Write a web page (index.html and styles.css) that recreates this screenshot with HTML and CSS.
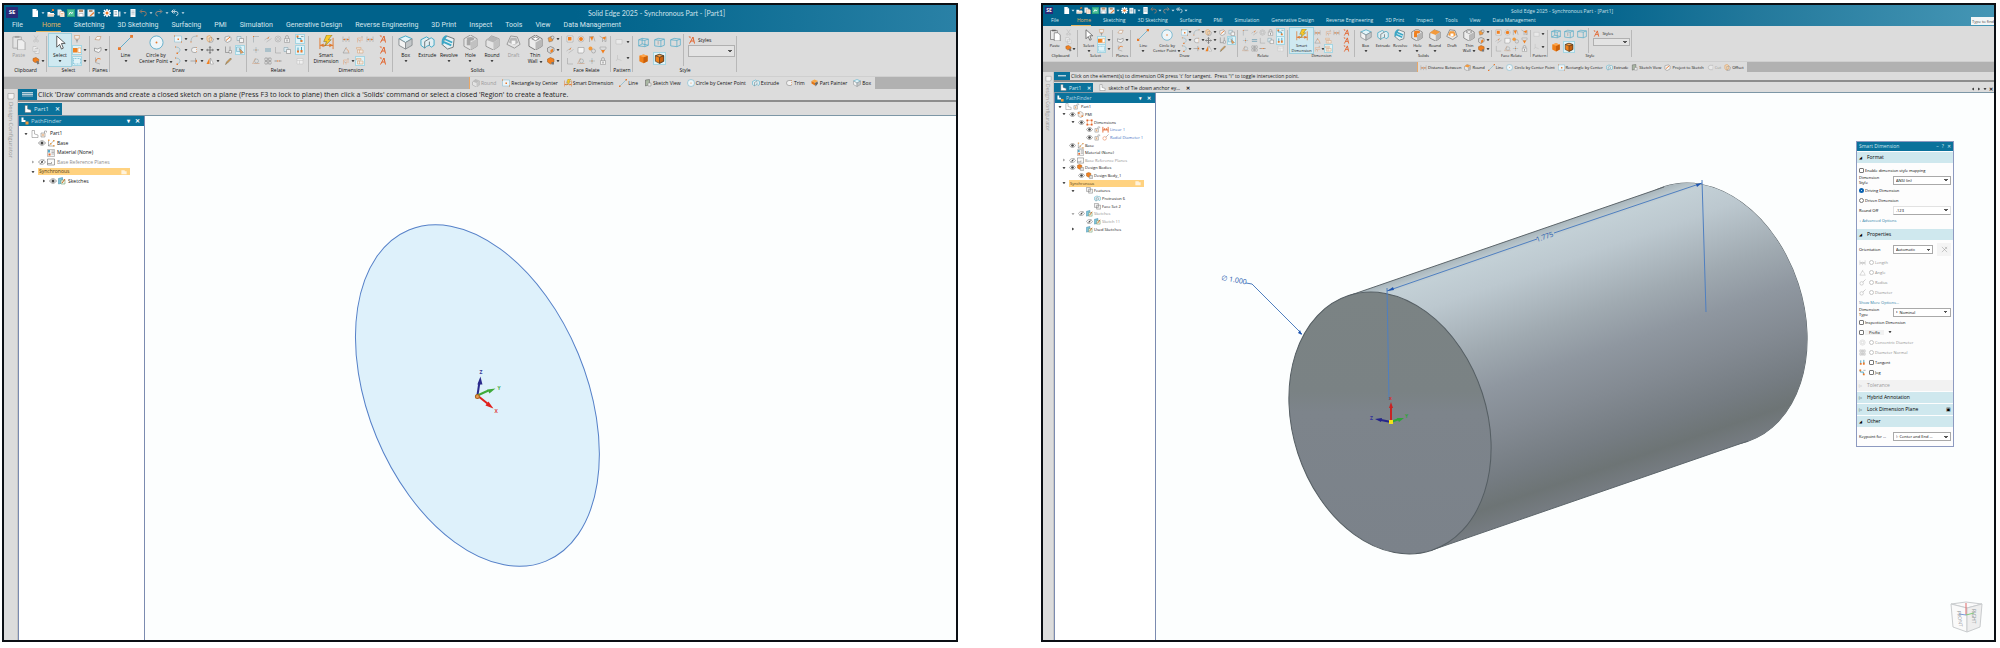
FILE: index.html
```html
<!DOCTYPE html>
<html lang="en">
<head>
<meta charset="utf-8">
<title>Solid Edge 2025 - Synchronous Part</title>
<link rel="stylesheet" href="styles.css">
</head>
<body>
<svg class="sprite" aria-hidden="true">
  <defs>
    <symbol id="dn" viewBox="0 0 16 16"><path d="M2 5h12l-6 7z" fill="currentColor"/></symbol>
    <symbol id="rt" viewBox="0 0 16 16"><path d="M5 2v12l7-6z" fill="currentColor"/></symbol>
    <symbol id="cross" viewBox="0 0 16 16"><path d="M2 2l12 12M14 2L2 14M9 2l5 5" stroke="#8a8a8a" fill="none"/></symbol>
    <symbol id="new" viewBox="0 0 16 16"><path d="M3 0h7l4 4v12H3z" fill="#fff"/><path d="M10 0v4h4z" fill="#b8cdd8"/></symbol>
    <symbol id="open" viewBox="0 0 16 16"><path d="M1 6h5l1 2h7v7H1z" fill="#fff"/><path d="M3 10h13l-3 5H1z" fill="#e9d4c0"/><path d="M9 5l4-4m0 0h-3m3 0v3" stroke="#e8792b" stroke-width="2" fill="none"/></symbol>
    <symbol id="docs" viewBox="0 0 16 16"><path d="M1 1h7l2 3v9H1z" fill="#e6eef2"/><path d="M6 5h7l2 3v8H6z" fill="#fff" stroke="#c98a5a"/><path d="M8 9h5M8 12h5" stroke="#e8792b"/></symbol>
    <symbol id="tpl" viewBox="0 0 16 16"><path d="M0 0h16v16H0z" fill="#2ba37c"/><path d="M2 2h12v12H2z" fill="#4cc09a"/><path d="M4 11l3-5 2 3 3-2" stroke="#fff" stroke-width="2" fill="none"/></symbol>
    <symbol id="save" viewBox="0 0 16 16"><path d="M1 1h14v14H1z" fill="#e9eef1"/><path d="M4 1h8v5H4z" fill="#b78f6e"/><path d="M4 9h8v6H4z" fill="#fff" stroke="#8a9aa5"/></symbol>
    <symbol id="saveas" viewBox="0 0 16 16"><path d="M1 1h14v14H1z" fill="#e9eef1"/><path d="M4 2h7v4H4z" fill="#b78f6e"/><path d="M5 14l8-8 2 2-8 7z" fill="#e8792b"/></symbol>
    <symbol id="gear" viewBox="0 0 16 16"><path d="M8 0v16M0 8h16M2 2l12 12M14 2L2 14" stroke="#fff" stroke-width="3"/><circle cx="8" cy="8" r="5" fill="#fff"/><circle cx="8" cy="8" r="3" fill="#e8792b"/></symbol>
    <symbol id="book" viewBox="0 0 16 16"><path d="M1 2h9v13H1z" fill="#fff"/><path d="M3 5h5M3 8h5M3 11h5" stroke="#55788a"/><path d="M11 5h4v10h-4z" fill="#c7d9e2"/></symbol>
    <symbol id="page" viewBox="0 0 16 16"><path d="M3 0h10v16H3z" fill="#f5f8fa"/><path d="M5 4h6M5 7h6M5 10h6" stroke="#7a97a6"/></symbol>
    <symbol id="undo" viewBox="0 0 16 16"><path d="M3 5h7a4 4 0 010 9M6 1L2 5l4 4" fill="none" stroke="#9a7a66" stroke-width="2"/></symbol>
    <symbol id="redo" viewBox="0 0 16 16"><path d="M13 5H6a4 4 0 000 9M10 1l4 4-4 4" fill="none" stroke="#9a8a80" stroke-width="2"/></symbol>
    <symbol id="hist" viewBox="0 0 16 16"><path d="M2 5h8a4 4 0 010 8M5 1L1 5l4 4M8 1L5 5l3 4" fill="none" stroke="#b9d0dc" stroke-width="2"/></symbol>

    <symbol id="paste" viewBox="0 0 16 16"><path d="M2 2h9v12H2z" fill="#e9e9e9" stroke="#777"/><path d="M4 1h5v2H4z" fill="#666"/><path d="M7 5h5l3 3v8H7z" fill="#fff" stroke="#777"/></symbol>
    <symbol id="cut" viewBox="0 0 16 16"><path d="M4 1l6 9M12 1L6 10" stroke="#b5b5b5" fill="none"/><circle cx="5" cy="12" r="2" fill="none" stroke="#b5b5b5"/><circle cx="11" cy="12" r="2" fill="none" stroke="#b5b5b5"/></symbol>
    <symbol id="copy" viewBox="0 0 16 16"><path d="M2 1h6l2 2v8H2zM6 5h6l2 2v8H6z" fill="#eee" stroke="#b0b0b0"/></symbol>
    <symbol id="brush" viewBox="0 0 16 16"><path d="M2 3l6-2 6 4-1 5-7 1-4-3z" fill="#f08020" stroke="#a85510"/><path d="M8 9l3 6 4-2-3-5z" fill="#777"/></symbol>
    <symbol id="cursor" viewBox="0 0 16 16"><path d="M4 1v12l3-3 2 5 2-1-2-5h4z" fill="#fff" stroke="#555"/></symbol>
    <symbol id="filter" viewBox="0 0 16 16"><path d="M3 1h10l-1 7H4z" fill="#eee" stroke="#d08a50"/><path d="M5 9h6l-2 3v3H7v-3z" fill="#999"/></symbol>
    <symbol id="prio" viewBox="0 0 16 16"><path d="M0 4h9v9H0z" fill="#f08020"/><path d="M10 4h6v9h-6z" fill="#fff" stroke="#f08020"/></symbol>
    <symbol id="dash" viewBox="0 0 16 16"><path d="M1 3h14v11H1z" fill="none" stroke="#3f9fc4" stroke-dasharray="2 1"/></symbol>
    <symbol id="pl1" viewBox="0 0 16 16"><path d="M2 9l4-6h8l-3 7z" fill="#f6f6f6" stroke="#b57a4a"/></symbol>
    <symbol id="pl2" viewBox="0 0 16 16"><path d="M1 10V4l6 2 7-3v6l-5 4z" fill="#f2f2f2" stroke="#666"/></symbol>
    <symbol id="pl3" viewBox="0 0 16 16"><path d="M3 1v10l9 3" fill="none" stroke="#888"/><path d="M4 9c0-6 5-7 9-5" fill="none" stroke="#e8792b" stroke-width="2"/></symbol>
    <symbol id="line" viewBox="0 0 16 16"><path d="M2 14L14 2" stroke="#59a9c9" stroke-width="1"/><path d="M0 13h3v3H0zM13 0h3v3h-3z" fill="#e8792b"/></symbol>
    <symbol id="circ" viewBox="0 0 16 16"><circle cx="8" cy="8" r="7" fill="#eef5f8" stroke="#62aecb"/><circle cx="8" cy="8" r="1" fill="#e8792b"/></symbol>
    <symbol id="rectc" viewBox="0 0 16 16"><path d="M1 2h14v12H1z" fill="#eef5f8" stroke="#7db9d0"/><path d="M7 7h3v3H7zM0 1h2v2H0zM14 13h2v2h-2z" fill="#e8792b"/></symbol>
    <symbol id="curve" viewBox="0 0 16 16"><path d="M2 14C2 2 8 3 14 2" fill="none" stroke="#7a9aa8" stroke-width="1"/><path d="M1 13h2v2H1zM13 1h2v2h-2z" fill="#e8792b"/></symbol>
    <symbol id="offs" viewBox="0 0 16 16"><path d="M2 3l5-2 4 3v7l-6 3-3-4z" fill="#f5d9b8" stroke="#d98a3d"/><path d="M6 6l5-1 4 3-2 6-6 1z" fill="none" stroke="#888"/></symbol>
    <symbol id="arc" viewBox="0 0 16 16"><path d="M3 2c10 0 12 8 4 12" fill="none" stroke="#62a6c0" stroke-width="1"/><path d="M2 1h2v2H2zM5 13h3v3H5z" fill="#e8792b"/></symbol>
    <symbol id="trimc" viewBox="0 0 16 16"><path d="M13 3H8a5 5 0 000 10h5" fill="#f2f2f2" stroke="#777"/><path d="M13 2v12" stroke="#e8792b" stroke-dasharray="2 2"/></symbol>
    <symbol id="move" viewBox="0 0 16 16"><path d="M8 1v14M1 8h14" stroke="#777" stroke-width="2"/><path d="M8 0l3 4H5zM8 16l3-4H5zM0 8l4-3v6zM16 8l-4-3v6z" fill="#888"/></symbol>
    <symbol id="ext" viewBox="0 0 16 16"><path d="M1 8h9M11 2v12" stroke="#777" stroke-width="1"/><path d="M10 8l4-3v6z" fill="#e8792b"/></symbol>
    <symbol id="mirr" viewBox="0 0 16 16"><path d="M1 14l6-12v12z" fill="#f08020"/><path d="M9 2l6 12H9z" fill="#fff" stroke="#888"/></symbol>
    <symbol id="proj" viewBox="0 0 16 16"><path d="M2 12V4l8-2 4 3v6l-7 4z" fill="#f4f4f4" stroke="#777"/><path d="M4 11l8-7" stroke="#e8792b" stroke-width="2"/></symbol>
    <symbol id="tosk" viewBox="0 0 16 16"><path d="M2 3h8v8H2z" fill="#dcebf1" stroke="#7a9aa8"/><path d="M7 7h8v8H7z" fill="#f4f4f4" stroke="#777"/></symbol>
    <symbol id="axis" viewBox="0 0 16 16"><path d="M3 1v12h10M12 1v9" fill="none" stroke="#666"/><path d="M10 9h5v5h-5z" fill="#f6f6f6" stroke="#777"/></symbol>
    <symbol id="region" viewBox="0 0 16 16"><path d="M1 2h9v9H1z" fill="#cfe9f2" stroke="#4aa0be"/><path d="M7 5l8 8-6 2z" fill="#f0a050" stroke="#777"/></symbol>
    <symbol id="pen" viewBox="0 0 16 16"><path d="M3 15l2-5 8-8 2 2-8 8z" fill="#e0a050" stroke="#665"/></symbol>
    <symbol id="r1" viewBox="0 0 16 16"><path d="M3 15V3h11" fill="none" stroke="#8c9aa0"/><path d="M2 2h2v2H2z" fill="#e8792b"/></symbol>
    <symbol id="r2" viewBox="0 0 16 16"><path d="M1 10l10-7M5 14l10-7" stroke="#a0a0a0"/><path d="M7 7l3-2" stroke="#e8792b" stroke-width="2"/></symbol>
    <symbol id="r3" viewBox="0 0 16 16"><circle cx="8" cy="8" r="6" fill="none" stroke="#a5a5a5"/><circle cx="8" cy="8" r="3" fill="none" stroke="#a5a5a5"/></symbol>
    <symbol id="lock" viewBox="0 0 16 16"><path d="M3 7h10v8H3z" fill="#eee" stroke="#888"/><path d="M5 7V4a3 3 0 016 0v3" fill="none" stroke="#888"/><path d="M7 9h2v4H7z" fill="#888"/></symbol>
    <symbol id="plus" viewBox="0 0 16 16"><path d="M8 2v12M2 8h12" stroke="#8fa8b4"/><path d="M7 7h2v2H7z" fill="#e8792b"/></symbol>
    <symbol id="eq" viewBox="0 0 16 16"><path d="M2 6h12M2 10h12" stroke="#7ba6b8" stroke-width="2"/></symbol>
    <symbol id="perp" viewBox="0 0 16 16"><path d="M3 2v12h11" fill="none" stroke="#999"/></symbol>
    <symbol id="tan" viewBox="0 0 16 16"><circle cx="9" cy="8" r="4" fill="none" stroke="#8a9aa0"/><path d="M1 14l6-12M3 13h12" stroke="#c9906a"/></symbol>
    <symbol id="sym" viewBox="0 0 16 16"><path d="M2 2h4v5H2zM10 2h4v5h-4zM2 9h4v5H2zM10 9h4v5h-4zM8 1v14" fill="#f2f2f2" stroke="#777"/></symbol>
    <symbol id="coll" viewBox="0 0 16 16"><path d="M1 8h5M10 8h5" stroke="#999" stroke-width="2"/><path d="M6 7h2v2H6zM9 7h2v2H9z" fill="#e8792b"/></symbol>
    <symbol id="rel" viewBox="0 0 16 16"><path d="M3 2v5h7v6" fill="none" stroke="#44a0c0" stroke-width="2"/><path d="M1 1h4v4H1zM9 10h4v4H9z" fill="#e8792b"/><path d="M10 3h5" stroke="#555"/></symbol>
    <symbol id="rel2" viewBox="0 0 16 16"><path d="M4 3v8M11 2v8" stroke="#44a0c0" stroke-width="2"/><path d="M2 9h4v4H2zM9 8h4v5H9z" fill="#e8792b"/></symbol>
    <symbol id="tbl" viewBox="0 0 16 16"><path d="M2 3h12v11H2zM2 7h12M7 7v7" fill="#f0f0f0" stroke="#c0c0c0"/></symbol>
    <symbol id="smart" viewBox="0 0 16 16"><path d="M1 3v12M15 3v12M1 11h14" stroke="#e07a30" fill="none"/><path d="M1 11l4-2v4zM15 11l-4-2v4z" fill="#e07a30"/><path d="M8 0h6l-4 5h3l-7 7 2-5H5z" fill="#f9c928" stroke="#6b5a20" stroke-width=".5"/></symbol>
    <symbol id="dim" viewBox="0 0 16 16"><path d="M2 3v11M14 3v11M8 6v8M2 9h12" stroke="#9a9a9a" fill="none"/><path d="M2 9l4-2v4zM14 9l-4-2v4z" fill="#e8792b"/></symbol>
    <symbol id="ang" viewBox="0 0 16 16"><path d="M2 14L9 2M2 14h13" stroke="#888" fill="none"/><path d="M7 5c4 1 6 4 6 8" stroke="#e8792b" fill="none" stroke-width="1"/></symbol>
    <symbol id="coord" viewBox="0 0 16 16"><path d="M3 15V6h11M8 15v-5h6" stroke="#e8a070" fill="none"/><path d="M12 2v3M5 9l2 3" stroke="#888"/></symbol>
    <symbol id="dimt" viewBox="0 0 16 16"><path d="M1 3h9v3H1zM3 8h11v6H3zM7 8v6" fill="#f3ece4" stroke="#d39a6a"/></symbol>
    <symbol id="styA" viewBox="0 0 16 16"><path d="M3 15L10 2l3 13M6 10h6" stroke="#e2622a" stroke-width="2" fill="none"/><path d="M1 1h4v4z" fill="#e2622a"/></symbol>
    <symbol id="box" viewBox="0 0 16 16"><path d="M8 1l7 3-7 4-7-4z" fill="#e4f5fa" stroke="#3ba7c6"/><path d="M1 4l7 4v7l-7-4z" fill="#f3f3f3" stroke="#8a8f92"/><path d="M8 8l7-4v7l-7 4z" fill="#c3c7c9" stroke="#8a8f92"/></symbol>
    <symbol id="extr" viewBox="0 0 16 16"><path d="M1 5l6-3 3 2 2-1 3 2v6l-3 2-2-2-3 1-2 2-4-3z" fill="#e2eef2" stroke="#3ba7c6"/><path d="M5 14V7l5-3M10 11V7" stroke="#6b7579" fill="none"/></symbol>
    <symbol id="revo" viewBox="0 0 16 16"><path d="M6 1l8 3-1 9-6 2-6-5 1-2z" fill="#e9f0f2" stroke="#6b7579"/><path d="M3 4l9 4M2 7l9 4M6 1C2 3 1 6 2 10" stroke="#3ba7c6" fill="none" stroke-width="2"/></symbol>
    <symbol id="hole" viewBox="0 0 16 16"><path d="M8 0l7 4v8l-7 4-7-4V4z" fill="#e8e8e8" stroke="#777"/><path d="M8 8l7-4v8l-7 4z" fill="#b5b5b5"/><ellipse cx="8" cy="4" rx="4" ry="2" fill="#f08020"/><path d="M4 5h4v6H4z" fill="#f08020"/></symbol>
    <symbol id="round" viewBox="0 0 16 16"><path d="M7 1l8 3v8l-6 4-8-4V6z" fill="#e8e8e8" stroke="#777"/><path d="M7 1l8 3-6 4-8-3z" fill="#f39a3c"/><path d="M9 8l6-4v8l-6 4z" fill="#b5b5b5"/></symbol>
    <symbol id="draft" viewBox="0 0 16 16"><path d="M5 1l7 1 3 8-6 4-8-4z" fill="#e8e8e8" stroke="#777"/><path d="M5 3h6l2 5-4 3-6-3z" fill="#f39a3c"/><path d="M6 6h4v4H6z" fill="#fff"/></symbol>
    <symbol id="thin" viewBox="0 0 16 16"><path d="M8 0l7 4v8l-7 4-7-4V4z" fill="#ececec" stroke="#777"/><path d="M8 8l7-4v8l-7 4z" fill="#b8b8b8"/><path d="M8 2l4 2-4 2-4-2z" fill="#fff" stroke="#888"/></symbol>
    <symbol id="add1" viewBox="0 0 16 16"><path d="M2 6l6-3 5 2-2 7-7 2z" fill="#f39a3c" stroke="#777"/><circle cx="11" cy="5" r="3" fill="#ddd" stroke="#666"/></symbol>
    <symbol id="add2" viewBox="0 0 16 16"><path d="M1 4l6-3 7 3v6l-7 5-6-4z" fill="#d5d5d5" stroke="#555"/><path d="M7 8l5-3v6l-5 3z" fill="#f08020"/></symbol>
    <symbol id="add3" viewBox="0 0 16 16"><path d="M1 4l6-3 7 3v6l-7 4-6-4z" fill="#f08020" stroke="#9b5a1c"/><path d="M9 10h5v5H9z" fill="#777"/></symbol>
    <symbol id="f1" viewBox="0 0 16 16"><path d="M2 2h12v12H2z" fill="#eee" stroke="#999"/><path d="M4 4h7v7H4z" fill="#f08020"/></symbol>
    <symbol id="f2" viewBox="0 0 16 16"><circle cx="8" cy="8" r="6" fill="#eee" stroke="#999"/><circle cx="8" cy="8" r="4" fill="#f08020"/></symbol>
    <symbol id="f3" viewBox="0 0 16 16"><path d="M3 14V3h8l3 10" fill="none" stroke="#8a8a8a"/><path d="M4 4l7-1-3 9z" fill="#f08020"/></symbol>
    <symbol id="f4" viewBox="0 0 16 16"><path d="M1 2l6 4v8M14 3v10l-5-2" fill="none" stroke="#888"/><path d="M6 5l8-2-2 7z" fill="#f08020"/></symbol>
    <symbol id="f5" viewBox="0 0 16 16"><path d="M2 3h12v9l-3 2H2z" fill="#f4f4f4" stroke="#888"/></symbol>
    <symbol id="f6" viewBox="0 0 16 16"><circle cx="5" cy="5" r="4" fill="#f39a3c"/><circle cx="11" cy="10" r="4" fill="#ddd" stroke="#888"/></symbol>
    <symbol id="f7" viewBox="0 0 16 16"><path d="M2 2h12v4L8 9 2 6z" fill="#ddd" stroke="#999"/><path d="M4 8h8l-4 7z" fill="#f08020"/></symbol>
    <symbol id="pat" viewBox="0 0 16 16"><path d="M2 3h12v9H2z" fill="#e9e9e9" stroke="#bbb"/></symbol>
    <symbol id="pat2" viewBox="0 0 16 16"><path d="M5 2v8l-3 4M5 10l8 3" fill="none" stroke="#bbb"/></symbol>
    <symbol id="wire1" viewBox="0 0 16 16"><path d="M1 4l5-2 9 1v9l-5 2-9-1zM1 4l9 1v9M10 5l5-2M6 2v8l9 2M6 10l-5 3" fill="none" stroke="#4aa7c6"/></symbol>
    <symbol id="wire2" viewBox="0 0 16 16"><path d="M1 4l5-2 9 1v9l-5 2-9-1zM1 4l9 1v9M10 5l5-2" fill="none" stroke="#4aa7c6"/><path d="M6 6v5" stroke="#999"/></symbol>
    <symbol id="wire3" viewBox="0 0 16 16"><path d="M1 4l5-2 9 1v9l-5 2-9-1zM1 4l9 1v9M10 5l5-2" fill="none" stroke="#4aa7c6"/></symbol>
    <symbol id="ocube" viewBox="0 0 16 16"><path d="M2 4l6-2 6 2v8l-6 3-6-3z" fill="#f08019"/><path d="M8 6l6-2v8l-6 3z" fill="#c9600c"/><path d="M2 4l6-2 6 2-6 2z" fill="#ffa64d"/></symbol>
    <symbol id="ocube2" viewBox="0 0 16 16"><path d="M2 4l6-2 6 2v8l-6 3-6-3z" fill="#f08019" stroke="#4a3a28"/><path d="M8 6l6-2v8l-6 3z" fill="#c9600c" stroke="#4a3a28"/><path d="M2 4l6-2 6 2-6 2z" fill="#ffa64d" stroke="#4a3a28"/></symbol>
    <symbol id="skv" viewBox="0 0 16 16"><path d="M3 2l8-1v10l-8 3z" fill="#a9b7a2" stroke="#555"/><path d="M8 8h6v6H8z" fill="#eee" stroke="#888"/></symbol>
    <symbol id="paint" viewBox="0 0 16 16"><path d="M1 4l6-3 7 3-6 4z" fill="#f9a845"/><path d="M1 4l7 4v5L1 9z" fill="#e27615"/><path d="M8 8l5-3 1 4-5 6z" fill="#666"/></symbol>
    <symbol id="part" viewBox="0 0 16 16"><path d="M2 1h5v7l7 2v5H2z" fill="#fff" stroke="#777"/></symbol>
    <symbol id="pfic" viewBox="0 0 16 16"><path d="M1 1h4v5h4v4H1z" fill="#fff"/><path d="M9 9h6v6H9z" fill="#f39a3c"/></symbol>
    <symbol id="unlock" viewBox="0 0 16 16"><path d="M2 6h8v8H2z" fill="#f7efe6" stroke="#777"/><path d="M9 6V2h4v3" fill="none" stroke="#777"/><path d="M5 8h2v4H5z" fill="#e8a060"/></symbol>
    <symbol id="eye" viewBox="0 0 16 16"><path d="M1 8c4-6 10-6 14 0-4 6-10 6-14 0z" fill="#fff" stroke="#444"/><circle cx="8" cy="8" r="3" fill="#444"/></symbol>
    <symbol id="eyex" viewBox="0 0 16 16"><path d="M1 8c4-6 10-6 14 0-4 6-10 6-14 0z" fill="#fff" stroke="#555"/><circle cx="8" cy="8" r="2" fill="#555"/><path d="M4 13l8-10" stroke="#444"/></symbol>
    <symbol id="base" viewBox="0 0 16 16"><path d="M3 2v12h12M3 14L14 3" stroke="#666" fill="none"/><path d="M2 1h3v3H2zM12 2h3v3h-3zM12 12h3v3h-3zM6 8h3v3H6z" fill="#e8a050"/></symbol>
    <symbol id="mat" viewBox="0 0 16 16"><path d="M1 1h14v14H1z" fill="#f4f4f4" stroke="#888"/><path d="M2 2h4v5H2z" fill="#5aa9c9"/><path d="M3 9h4v4H3z" fill="#e8692b"/><path d="M9 4h5M9 7h5M9 10h5" stroke="#777"/></symbol>
    <symbol id="refp" viewBox="0 0 16 16"><path d="M1 2h14v12H1zM1 11h8v-3" fill="#fafafa" stroke="#555"/></symbol>
    <symbol id="sk" viewBox="0 0 16 16"><path d="M1 3l8-2v11l-8 2z" fill="#7fc3dc" stroke="#3b88a5"/><path d="M6 6h8v8H6z" fill="#eef7ea" stroke="#5a8a5a"/><path d="M8 12l6-8" stroke="#d06a20" stroke-width="2"/></symbol>
    <symbol id="pmi" viewBox="0 0 16 16"><path d="M2 3l6-2 6 4v6l-5 4-6-3z" fill="#f6eee6" stroke="#777"/><path d="M2 3h4v3H2zM10 10h4v3h-4z" fill="#e8792b"/></symbol>
    <symbol id="dims" viewBox="0 0 16 16"><path d="M3 3h10v10H3z" fill="none" stroke="#e8792b" stroke-width="1"/><path d="M1 1h4v4H1zM11 1h4v4h-4zM1 11h4v4H1zM11 11h4v4h-4z" fill="#e2622a"/></symbol>
    <symbol id="lin" viewBox="0 0 16 16"><path d="M2 2v13M14 2v13M2 9h12M6 5v4M10 5v4" stroke="#e2622a" stroke-width="2" fill="none"/></symbol>
    <symbol id="rad" viewBox="0 0 16 16"><circle cx="6" cy="10" r="4" fill="none" stroke="#e2622a"/><path d="M9 7l6-6" stroke="#666"/></symbol>
    <symbol id="body" viewBox="0 0 16 16"><path d="M1 3l5-2 5 2v6l-5 3-5-3z" fill="#f08020" stroke="#a55a15"/><path d="M8 8h7v7H8z" fill="#ddd" stroke="#777"/></symbol>
    <symbol id="feat" viewBox="0 0 16 16"><path d="M1 1h9v9H1zM6 5h9v9H6z" fill="#f4f4f4" stroke="#666"/></symbol>
    <symbol id="mark" viewBox="0 0 16 16"><path d="M1 3h9v3h5v8H1z" fill="#fff3dc"/></symbol>
  </defs>
</svg>

<main class="desk">
  <section class="win win-a" aria-label="Sketch region">
    <header class="top">
      <div class="titlebar"><div class="qat"></div><h1>Solid Edge 2025 - Synchronous Part - [Part1]</h1></div>
      <nav class="menu"></nav>
    </header>
    <div class="ribbon"></div>
    <div class="quick"><div class="quick-in"></div></div>
    <div class="work">
      <aside class="rail"><svg class="ic"><use href="#f5"/></svg><span>Design Configurator</span></aside>
      <div class="doc">
        <p class="prompt"><span class="chip"></span>Click 'Draw' commands and create a closed sketch on a plane (Press F3 to lock to plane) then click a 'Solids' command or select a closed 'Region' to create a feature.</p>
        <div class="tabs">
          <button class="tab on"><svg class="ic"><use href="#part"/></svg>Part1<b>✕</b></button>
        </div>
        <div class="area">
          <aside class="finder">
            <h2><svg class="ic"><use href="#pfic"/></svg>PathFinder<button aria-label="Options">▾</button><button aria-label="Close">✕</button></h2>
            <ul class="tree"></ul>
          </aside>
          <div class="view">
            <svg class="scene" viewBox="145 116 810 523" role="img" aria-label="Closed circular region in perspective">
              <ellipse cx="477" cy="395" rx="179" ry="109" transform="rotate(67.500 477 395)" fill="#def1fb" stroke="#5580c8"/>
              <g stroke-width="2">
                <path d="M477 395l2-13" stroke="#2b2b8c"/><path d="M480 376l2 8h-5z" fill="#2b2b8c"/>
                <path d="M477 395l11-5" stroke="#3faa3a"/><path d="M495 388l-6 5-2-4z" fill="#3faa3a"/>
                <path d="M477 395l10 8" stroke="#e0201c"/><path d="M493 408l-8-3 3-4z" fill="#e0201c"/>
              </g>
              <circle cx="477" cy="396" r="2" fill="#e89a50" stroke="#a8641e"/>
              <g class="axes"><text x="479" y="374" fill="#3a3a96">Z</text><text x="497" y="389" fill="#4fb04a">Y</text><text x="494" y="412" fill="#e0403c">X</text></g>
            </svg>
          </div>
        </div>
      </div>
    </div>
  </section>

  <section class="win win-b" aria-label="Dimensioned cylinder">
    <header class="top">
      <div class="titlebar"><div class="qat"></div><h1>Solid Edge 2025 - Synchronous Part - [Part1]</h1></div>
      <div class="menurow"><nav class="menu"></nav><input class="find" type="text" aria-label="Find a command" value="Type to find"></div>
    </header>
    <div class="ribbon"></div>
    <div class="quick"><div class="quick-in"></div></div>
    <div class="work">
      <aside class="rail"><svg class="ic"><use href="#f5"/></svg><span>Design Configurator</span></aside>
      <div class="doc">
        <p class="prompt"><span class="chip"></span>Click on the element(s) to dimension OR press 't' for tangent.&nbsp; Press "i" to toggle intersection point.</p>
        <div class="tabs">
          <button class="tab on"><svg class="ic"><use href="#part"/></svg>Part1<b>✕</b></button>
          <button class="tab"><svg class="ic"><use href="#part"/></svg>sketch of Tie down anchor ey...<b>✕</b></button>
          <span class="tabnav"><svg class="ic flip"><use href="#rt"/></svg><svg class="ic"><use href="#rt"/></svg><svg class="ic"><use href="#dn"/></svg><b>✕</b></span>
        </div>
        <div class="area">
          <aside class="finder">
            <h2><svg class="ic"><use href="#pfic"/></svg>PathFinder<button aria-label="Options">▾</button><button aria-label="Close">✕</button></h2>
            <ul class="tree"></ul>
          </aside>
          <div class="view">
            <svg class="scene" viewBox="1156 93 838 547" role="img" aria-label="Cylinder with diameter and length dimensions">
              <defs>
                <linearGradient id="side" gradientUnits="userSpaceOnUse" x1="1348" y1="296" x2="1435" y2="549">
                  <stop offset="0" stop-color="#a9b6bc"/><stop offset=".04" stop-color="#c3d0d6"/><stop offset=".14" stop-color="#bcc8cf"/><stop offset=".35" stop-color="#a0aab1"/><stop offset=".5" stop-color="#8f97a0"/><stop offset=".66" stop-color="#838a92"/><stop offset=".82" stop-color="#757c82"/><stop offset=".92" stop-color="#6d7475"/><stop offset="1" stop-color="#767c82"/>
                </linearGradient>
                <linearGradient id="face" gradientUnits="userSpaceOnUse" x1="0" y1="292" x2="0" y2="554">
                  <stop offset="0" stop-color="#7b8384"/><stop offset=".38" stop-color="#7a8284"/><stop offset=".46" stop-color="#7d848b"/><stop offset="1" stop-color="#7b828a"/>
                </linearGradient>
                <clipPath id="hull"><ellipse cx="1706" cy="314" rx="134" ry="97" transform="rotate(72 1706 314)"/><path d="M1348 296L1664 187L1748 441L1432 550z"/></clipPath>
                <clipPath id="cap"><ellipse cx="1390" cy="423" rx="134" ry="97" transform="rotate(72 1390 423)"/></clipPath>
              </defs>
              <ellipse cx="1706" cy="314" rx="134" ry="97" transform="rotate(72 1706 314)" fill="none" stroke="#5d666b"/>
              <path d="M1280 170h540v400h-540z" fill="url(#side)" clip-path="url(#hull)"/>
              <path d="M1348 296L1664 187M1432 550L1748 441" stroke="#5d666b"/>
              <path d="M1280 280h220v290h-220z" fill="url(#face)" clip-path="url(#cap)"/>
              <ellipse cx="1390" cy="423" rx="134" ry="97" transform="rotate(72 1390 423)" fill="none" stroke="#555e63"/>
              <g stroke="#4f7fc0" fill="none">
                <path d="M1387 291L1537 239M1554 233L1702 183M1387 288l2 112M1702 180l4 132M1246 283l6 1 50 50"/>
              </g>
              <path d="M1387 291l6-4 1 3zM1702 183l-6 1 1 3zM1302 335l-4-2 2-3z" fill="#1f55b0"/>
              <text class="dimtext" x="1537" y="242" transform="rotate(-19 1537 242)">1.775</text>
              <text class="dimtext" x="1221" y="280" transform="rotate(10 1221 280)">∅ 1.000</text>
              <path d="M1391 422v-16" stroke="#c82222" stroke-width="2"/><path d="M1391 402l2 6h-4z" fill="#c82222"/>
              <path d="M1391 422l8-3" stroke="#2fa43a" stroke-width="2"/><path d="M1404 418l-5 4-2-4z" fill="#2fa43a"/>
              <path d="M1391 422l-10-2" stroke="#24248a" stroke-width="2"/><path d="M1375 419l7-1-1 4z" fill="#24248a"/>
              <path d="M1389 420h4v4h-4z" fill="#f4e11a"/>
              <g class="axes"><text x="1389" y="400" fill="#d03030">x</text><text x="1405" y="418" fill="#2fa43a">Y</text><text x="1370" y="420" fill="#33339a">Z</text></g>
              <g stroke="#c9ccce" fill="#fafafa">
                <path d="M1951 604l15-2 16 2-15 4z"/><path d="M1951 604l16 4v24l-14-5z"/><path d="M1967 608l15-4-2 23-13 5z" fill="#eeeeee"/>
              </g>
              <path d="M1966 603v12" stroke="#e06a6a"/><path d="M1966 615l8-2" stroke="#7ec87a"/><path d="M1966 615l-7-1" stroke="#7a9ad8"/>
              <g class="cube"><text x="1957" y="611" transform="rotate(82 1957 611)">FRONT</text><text x="1972" y="609" transform="rotate(90 1972 609)">RIGHT</text></g>
            </svg>

            <form class="dialog">
              <header><h3>Smart Dimension</h3><button type="button" aria-label="Minimize">–</button><button type="button" aria-label="Help">?</button><button type="button" aria-label="Close">✕</button></header>
              <h4><i>◢</i>Format</h4>
              <div class="sec">
                <label class="row"><input type="checkbox">Enable dimension style mapping</label>
                <label class="row field"><span>Dimension Style</span><select><option>ANSI (in)</option></select></label>
                <label class="row"><input type="radio" name="drv" checked>Driving Dimension</label>
                <label class="row"><input type="radio" name="drv">Driven Dimension</label>
                <label class="row field"><span>Round Off</span><select class="lite"><option>.123</option></select></label>
                <a class="row" href="#adv">+ Advanced Options</a>
              </div>
              <h4><i>◢</i>Properties</h4>
              <div class="sec props">
                <div class="row field tall"><label for="ori">Orientation</label><select id="ori"><option>Automatic</option></select><button type="button" aria-label="Pick axis"><svg class="ic"><use href="#cross"/></svg></button></div>
                <label class="row off"><svg class="ic"><use href="#dim"/></svg><input type="radio" name="kind" disabled>Length</label>
                <label class="row off"><svg class="ic"><use href="#ang"/></svg><input type="radio" name="kind" disabled>Angle</label>
                <label class="row off"><svg class="ic"><use href="#rad"/></svg><input type="radio" name="kind" disabled>Radius</label>
                <label class="row off"><svg class="ic"><use href="#rad"/></svg><input type="radio" name="kind" disabled>Diameter</label>
                <a class="row" href="#more">Show More Options...</a>
                <label class="row field"><span>Dimension Type</span><select><option>ˣ&nbsp; Nominal</option></select></label>
                <label class="row"><input type="checkbox">Inspection Dimension</label>
                <label class="row"><input type="checkbox"><span class="btn">Prefix</span><svg class="ic car"><use href="#dn"/></svg></label>
                <label class="row off"><svg class="ic"><use href="#r3"/></svg><input type="radio" name="dia" disabled>Concentric Diameter</label>
                <label class="row off"><svg class="ic"><use href="#sym"/></svg><input type="radio" name="dia" disabled>Diameter Normal</label>
                <label class="row"><svg class="ic"><use href="#rel2"/></svg><input type="checkbox">Tangent</label>
                <label class="row"><svg class="ic"><use href="#rel"/></svg><input type="checkbox">Jog</label>
              </div>
              <h4 class="mute"><i>▷</i>Tolerance</h4>
              <h4><i>▷</i>Hybrid Annotation</h4>
              <h4><i>▷</i>Lock Dimension Plane<span class="lockbox">▣</span></h4>
              <h4><i>◢</i>Other</h4>
              <div class="sec last">
                <label class="row field tall"><span>Keypoint for ...</span><select><option>⁝◦ Center and End ...</option></select></label>
              </div>
            </form>
          </div>
        </div>
      </div>
    </div>
  </section>
</main>
<script src="app.js"></script>
</body>
</html>
```
FILE: styles.css
```css
* { box-sizing: border-box; }
body { margin: 0; background: #fff; color: #111; font-family: "Open Sans", "Noto Sans", sans-serif; }
button, input, select { font: inherit; color: inherit; margin: 0; padding: 0; border: 0; background: none; }
h1, h2, h3, h4, p, ul { margin: 0; padding: 0; font-size: inherit; font-weight: normal; list-style: none; }
a { text-decoration: none; }
.sprite { position: absolute; width: 0; height: 0; }
.ic { display: block; flex: none; width: var(--sm); height: var(--sm); overflow: visible; }

.desk { display: grid; grid-template-columns: 956fr 955fr; gap: 83px; min-height: 100vh; padding: 3px 4px 6px 2px; }
.win { display: flex; flex-direction: column; min-width: 0; overflow: hidden; border: 2px solid #0b0f14; background: #dcdcdc; white-space: nowrap; }
.win-a {
  --sm: 8px; --big: 15px; --car: 4px; --qgap: 2px; --lead: 11px; --tx: 584px; --qx: 465px;
  --title: 15px; --menu: 12px; --body: 34px; --cap: 10px; --quick: 12px; --prompt: 13px; --tabs: 14px;
  --rail: 14px; --finder: 127px; --slot: 9px; --f-title: 7px; --f-menu: 7px; --f-rib: 5px; --f-tree: 5px; --lh: 6px; --mgap: 13px;
  --cols: 43px 43px 20px 137px 62px 84px 169px 49px 22px 104px;
}
.win-b {
  --sm: 7px; --big: 12px; --car: 4px; --qgap: 1px; --lead: 9px; --tx: 468px; --qx: 374px;
  --title: 11px; --menu: 10px; --body: 27px; --cap: 8px; --quick: 10px; --prompt: 10px; --tabs: 11px;
  --rail: 11px; --finder: 102px; --slot: 8px; --f-title: 5px; --f-menu: 5px; --f-rib: 4px; --f-tree: 4px; --lh: 5px; --mgap: 12px;
  --cols: 35px 35px 18px 107px 50px 67px 137px 39px 17px 84px;
}

.top { background: linear-gradient(90deg, #00628b 0 60%, #06688f 68%, #2a81a6); color: #cfe2eb; }
.win-b .top { background: linear-gradient(90deg, #00628b 0 56%, #23799c 75%, #4596b5); }
.titlebar { display: grid; grid-template-columns: var(--tx) 1fr; align-items: center; height: var(--title); font-size: var(--f-title); }
.win-a h1 { font-family: Lato, sans-serif; }
.qat { display: flex; align-items: center; gap: var(--qgap); }
.logo { width: calc(var(--title) - 3px); margin: 0 var(--lead) 0 2px; background: #2b2b78; color: #fff; font-weight: bold; text-align: center; line-height: calc(var(--title) - 4px); font-size: calc(var(--f-rib) + 1px); }
.qat .car { width: var(--car); }
.menurow { display: flex; align-items: flex-end; justify-content: space-between; }
.menu { display: flex; gap: var(--mgap); height: var(--menu); padding-left: 8px; font-size: var(--f-menu); line-height: calc(var(--menu) - 2px); }
.win-a .menu { font-family: Roboto, sans-serif; }
.menu a { color: #d5e6ee; }
.menu a.on { color: #e2b562; border-bottom: 1px solid #e2b562; padding-left: 6px; }
.find { width: 23px; height: 8px; background: #f3f6f7; color: #444; font-size: 4px; padding-left: 1px; align-self: center; }

.ribbon { display: grid; grid-template-columns: var(--cols); border-bottom: 1px solid #cfcfcf; font-size: var(--f-rib); line-height: var(--lh); }
.group { position: relative; }
.group::after { content: ""; position: absolute; right: 0; top: 4px; bottom: 4px; border-right: 1px solid #b8b8b8; }
.group h2 { height: var(--cap); line-height: calc(var(--cap) - 2px); text-align: center; }
.cells { display: grid; height: var(--body); padding: 2px 2px 0; grid-auto-flow: column; grid-template-rows: repeat(3, minmax(0, 1fr)); justify-items: center; align-items: center; }
.cells > * { min-width: 0; }
.cells .hi { outline: 1px solid #a5d5e2; background: #e0f3f8; }
.big { grid-row: span 3; align-self: stretch; width: 100%; min-height: 0; display: flex; flex-direction: column; align-items: center; line-height: var(--lh); }
.big .ic { width: var(--big); height: var(--big); margin: 1px 0 2px; }
.big .car, .big .ic.car { width: var(--car); height: var(--car); margin: 1px 0 0; }
.big span { display: flex; flex-direction: column; align-items: center; }
.big .two { display: flex; flex-direction: row; align-items: center; gap: 1px; }
.big.on { background: #cfe9f1; outline: 1px solid #9fd0de; }
.big.off span { color: #999; }
.cells > .car { width: var(--car); height: var(--car); }
.g-clip .cells { grid-template-columns: 26fr 10fr 4fr; }
.g-sel .cells { grid-template-columns: 22fr 11fr 6fr; }
.g-pl .cells { grid-template-columns: 12fr 4fr; }
.g-draw .cells { grid-template-columns: 27fr 34fr 10fr 6fr 10fr 6fr 10fr 6fr 13fr 11fr; }
.g-rel .cells { grid-template-columns: 14fr 10fr 10fr 10fr 15fr; }
.g-dim .cells { grid-template-columns: 30fr 10fr 4fr 10fr 10fr 16fr; }
.g-sol .cells { grid-template-columns: repeat(7, 43fr) 20fr 8fr; }
.g-face .cells { grid-template-columns: repeat(4, 1fr); }
.g-pat .cells, .g-sty .cells { grid-template-rows: repeat(2, minmax(0, 1fr)); }
.g-pat .cells { grid-template-columns: 11fr 7fr; }
.g-sty .cells { grid-template-columns: 16fr 16fr 16fr 52fr; }
.g-sty .cells .ic { width: calc(var(--sm) + 3px); height: calc(var(--sm) + 3px); }
.styles { grid-row: span 2; align-self: stretch; width: 100%; padding: 2px 0 0 4px; border-left: 1px solid #b8b8b8; }
.styles label { display: flex; align-items: center; gap: 2px; }
.g-sty .cells .styles .ic { width: var(--sm); height: var(--sm); }
select {
  appearance: none; border: 1px solid #a9a9a9; background-color: #fff; background-repeat: no-repeat;
  background-image: linear-gradient(45deg, transparent 50%, #555 50%), linear-gradient(-45deg, transparent 50%, #555 50%);
  background-size: 2px 2px; background-position: right 4px center, right 2px center;
}
.styles select { display: block; width: 100%; height: calc(var(--title) - 3px); margin-top: 1px; border-color: #b0b0b0; background-color: #e3e3e3; }
.win-a .i-hole, .win-a .i-round, .win-a .i-draft { filter: grayscale(1) opacity(.7); }
.win-a .i-paste { filter: opacity(.5); }

.quick { display: flex; height: var(--quick); background: #b1b1b1; padding-left: var(--qx); font-size: var(--f-rib); }
.quick-in { display: flex; align-items: center; gap: 3px; padding: 0 3px 0 2px; background: #dcdcdc; border-left: 1px solid #e9a868; }
.quick button { display: flex; align-items: center; gap: 1px; }
.quick .off { color: #999; }
.quick .off .ic { filter: grayscale(1) opacity(.6); }
.win-a .quick-in { gap: 6px; padding-right: 4px; }

.work { flex: 1; display: flex; min-height: 0; }
.rail { width: var(--rail); flex: none; display: flex; flex-direction: column; align-items: center; gap: 2px; padding-top: 3px; color: #9a9a9a; font-size: 6px; border-right: 1px solid #c6c6c6; }
.win-b .rail { font-size: 5px; }
.rail span { writing-mode: vertical-rl; line-height: 8px; }
.doc { flex: 1; min-width: 0; display: flex; flex-direction: column; }
.prompt { display: flex; align-items: center; gap: 1px; height: var(--prompt); border-bottom: 2px solid #8d8d8d; font-size: var(--f-menu); color: #222; }
.chip { width: calc(var(--rail) + 5px); align-self: stretch; border: solid #0b729b; border-width: 3px 4px; background: linear-gradient(#b7d3df 1px, #5d99b3 1px 2px, #b7d3df 2px 3px, #5d99b3 3px); }
.tabs { display: flex; align-items: flex-end; height: var(--tabs); font-size: calc(var(--f-rib) + 1px); border-bottom: 1px solid #7d97a6; }
.tab { display: flex; align-items: center; gap: 2px; height: calc(100% - 1px); padding: 0 2px 0 6px; line-height: 8px; }
.tab.on { background: #0b729b; color: #d8ecf4; }
.tab b { padding-left: 4px; }
.tabnav { display: flex; align-items: center; gap: 2px; margin: 0 1px 0 auto; }
.tabnav .ic { width: 4px; height: 4px; }
.flip { transform: rotate(180deg); }
.area { flex: 1; display: flex; min-height: 0; background: #fcfefe; }
.finder { width: var(--finder); flex: none; border: solid #7b8bb0; border-width: 0 1px; background: #fff; font-size: var(--f-tree); }
.finder h2 { display: flex; align-items: center; gap: 2px; height: 10px; background: #0b729b; color: #b5d6e4; padding: 0 4px 0 2px; font-size: calc(var(--f-tree) + 1px); }
.finder h2 button { color: #fff; line-height: 8px; padding-left: 3px; font-weight: bold; }
.finder h2 button:first-of-type { margin-left: auto; }
.tree { display: grid; grid-auto-rows: 1fr; }
.win-a .tree { height: 57px; margin-top: 3px; }
.win-b .tree { height: 130px; }
.tree li { display: flex; align-items: center; min-height: 0; line-height: 7px; }
.tree i { width: var(--slot); flex: none; display: flex; justify-content: center; }
.tree i .car { width: 4px; height: 4px; }
.tree span { padding-left: 2px; }
.win-b .tree span { padding-left: 1px; }
.l0 { padding-left: 2px; } .l1 { padding-left: 9px; } .l2 { padding-left: 20px; } .l3 { padding-left: 28px; }
.win-b .l0 { padding-left: 1px; } .win-b .l1 { padding-left: 5px; } .win-b .l2 { padding-left: 14px; } .win-b .l3 { padding-left: 22px; }
.tree .dimd { color: #8e8e8e; }
.tree .lnk { color: #3d6fc4; }
.tree .sync span { flex: 1; background: #ffd280; color: #4c3a16; margin: 0 14px 0 1px; padding-left: 1px; display: flex; align-items: center; justify-content: space-between; padding-right: 3px; }
.win-b .tree .sync span { margin-right: 11px; }
.tree .sync span .ic { width: 6px; height: 6px; }

.view { position: relative; flex: 1; min-width: 0; display: flex; }
.scene { position: absolute; inset: 0; width: 100%; height: 100%; }
.axes { font-size: 5px; font-weight: bold; }
.dimtext { font-size: 7px; fill: #2458ad; }
.cube { font-size: 5px; fill: #8a8f94; }

.dialog { position: absolute; right: 40px; top: 48px; width: 98px; border: 1px solid #8d9ac0; background: #fdfdfd; font-size: 4px; line-height: 5px; color: #000; }
.dialog header { display: flex; align-items: center; gap: 3px; height: 9px; margin-bottom: 1px; padding: 0 2px; background: #0b729b; color: #d0e6ef; font-size: 5px; }
.dialog header h3 { margin-right: auto; }
.dialog h4 { display: flex; align-items: center; height: 11px; margin-bottom: 1px; padding: 0 2px; background: #cfe8ee; font-size: 5px; }
.dialog h4 i { width: 8px; font-style: normal; font-size: 4px; }
.dialog h4.mute { background: #f2f2f2; color: #999; }
.lockbox { margin-left: auto; }
.sec { padding: 1px 2px 4px; }
.sec.props { padding-bottom: 3px; }
.sec.last { padding-bottom: 2px; }
.row { display: flex; align-items: center; gap: 1px; height: 10px; }
.row.tall { height: 15px; }
.row.off { color: #8f8f8f; }
.row.off .ic { filter: grayscale(1) opacity(.7); }
.row > .ic { width: 7px; height: 7px; margin-right: 2px; }
.row > .car { width: 4px; height: 4px; margin-left: 3px; }
.row .btn { padding: 0 4px; background: #f1f1f1; }
a.row { color: #2f7fa8; }
.field > span, .field > label { width: 33px; padding-right: 9px; white-space: normal; line-height: 5px; }
.field.tall > span, .field.tall > label { padding-right: 0; white-space: nowrap; }
.field select { flex: 1; height: 9px; padding: 0 7px 0 2px; min-width: 0; line-height: 7px; }
.field select.lite { border-color: #e2e2e2 #e2e2e2 #a9a9a9; }
.field button { width: 14px; height: 13px; display: grid; place-items: center; background: #f4f4f4; margin-left: 3px; }
.dialog input { appearance: none; width: 5px; height: 5px; border: 1px solid #777; border-radius: 1px; background: #fff; flex: none; }
.dialog input[type=radio] { border-radius: 50%; }
.dialog input:checked { border: 2px solid #0a62b0; }
.dialog input:disabled { border-color: #c4c4c4; }
```
FILE: app.js
```js
const icon = (id, cls = '') => `<svg class="ic i-${id} ${cls}" aria-hidden="true"><use href="#${id}"/></svg>`;
const caret = icon('dn', 'car');

const qat = 'new v open docs tpl save saveas v gear book v page undo v redo v hist v'.split(' ');
const menu = ['File', 'Home', 'Sketching', '3D Sketching', 'Surfacing', 'PMI', 'Simulation', 'Generative Design',
  'Reverse Engineering', '3D Print', 'Inspect', 'Tools', 'View', 'Data Management'];

/* "!" big button, "v" caret, "-" empty cell, "*" highlighted; "_" breaks a label, "+" adds a caret line, "~" an inline caret */
const groups = [
  ['clip', 'Clipboard', ['!paste|Paste', 'cut', 'copy', 'brush', '-', '-', 'v']],
  ['sel', 'Select', ['!cursor|Select+', 'filter', 'prio*', 'dash*', '-', 'v', 'v']],
  ['pl', 'Planes', ['pl1', 'pl2', 'pl3', '-', 'v', '-']],
  ['draw', 'Draw', ['!line|Line+', '!circ|Circle by_Center Point~', 'rectc', 'arc', 'arc', 'v', 'v', 'v', 'curve', 'trimc', 'ext', 'v', 'v', 'v',
    'offs', 'move', 'mirr', 'v', 'v', 'v', 'proj', 'axis', 'pen', 'tosk', 'region*', '-']],
  ['rel', 'Relate', ['r1', 'plus', 'tan', 'r2', 'eq', 'sym', 'r3', 'perp', 'coll', 'lock', 'tosk', '-', 'rel*', 'rel2*', 'tbl']],
  ['dim', 'Dimension', ['!smart|Smart_Dimension', 'dim', 'ang', 'coord', '-', '-', 'v', 'coord', 'dimt', 'dimt*', 'dim', '-', '-', 'styA', 'styA', 'styA']],
  ['sol', 'Solids', ['!box|Box+', '!extr|Extrude', '!revo|Revolve+', '!hole|Hole+', '!round|Round+', '!draft|Draft', '!thin|Thin_Wall~',
    'add1', 'add2', 'add3', 'v', 'v', 'v']],
  ['face', 'Face Relate', ['f1', 'r2', 'perp', 'f2', 'f5', 'tan', 'f3', 'f6', 'plus', 'f4', 'f7', 'lock']],
  ['pat', 'Pattern', ['pat', 'pat2', 'v', 'v']],
  ['sty', 'Style', ['wire1', 'ocube', 'wire2', 'ocube2*', 'wire3', '-', '=styles']],
];

const windows = {
  'win-a': {
    active: 'cursor', off: ['paste', 'draft'],
    quick: ['round|Round|off', 'rectc|Rectangle by Center', 'smart|Smart Dimension', 'line|Line', 'skv|Sketch View', 'circ|Circle by Center Point',
      'extr|Extrude', 'trimc|Trim', 'paint|Part Painter', 'box|Box'],
    tree: [[0, 'v part unlock', 'Part1'], [1, '- eye base', 'Base'], [1, '- - mat', 'Material (None)'], [1, '> eyex refp', 'Base Reference Planes', 'dimd'],
      [1, 'v', 'Synchronous', 'sync'], [2, '> eye sk', 'Sketches']],
  },
  'win-b': {
    active: 'smart', off: [],
    quick: ['dim|Distance Between', 'round|Round', 'line|Line', 'circ|Circle by Center Point', 'rectc|Rectangle by Center', 'extr|Extrude',
      'skv|Sketch View', 'proj|Project to Sketch', 'trimc|Cut|off', 'offs|Offset'],
    tree: [[0, 'v part unlock', 'Part1'], [1, 'v eye pmi', 'PMI'], [2, 'v eye dims', 'Dimensions'], [3, '- eye unlock lin', 'Linear 1', 'lnk'],
      [3, '- eye unlock rad', 'Radial Diameter 1', 'lnk'], [1, '- eye base', 'Base'], [1, '- - mat', 'Material (None)'],
      [1, '> eyex refp', 'Base Reference Planes', 'dimd'], [1, 'v eye body', 'Design Bodies'], [2, '- eye body', 'Design Body_1'],
      [1, 'v', 'Synchronous', 'sync'], [2, 'v - feat', 'Features'], [3, '- - extr', 'Protrusion 6'], [3, '- - feat', 'Face Set 2'],
      [2, 'v eyex sk', 'Sketches', 'dimd'], [3, '- eyex sk', 'Sketch 11', 'dimd'], [2, '> - sk', 'Used Sketches']],
  },
};

function bigButton(token, conf) {
  const [id, label] = token.slice(1).split('|');
  const cls = (id === conf.active ? ' on' : '') + (conf.off.includes(id) ? ' off' : '');
  const lines = label.replace(/[+~]/, '').split('_');
  const last = lines.length - 1;
  const text = lines.map((l, i) => `<span class="two">${l}${i === last && label.endsWith('~') ? caret : ''}</span>`).join('');
  return `<button class="big${cls}">${icon(id)}<span>${text}</span>${label.endsWith('+') ? caret : ''}</button>`;
}

function cell(token, conf, uid) {
  if (token === '-') return '<span></span>';
  if (token === 'v') return caret;
  if (token === '=styles') return `<div class="styles"><label for="st-${uid}">${icon('styA')}Styles</label><select id="st-${uid}"><option></option></select></div>`;
  if (token[0] === '!') return bigButton(token, conf);
  const id = token.replace('*', '');
  return `<button class="${token.endsWith('*') ? 'hi' : ''}" aria-label="${id}">${icon(id)}</button>`;
}

for (const [name, conf] of Object.entries(windows)) {
  const win = document.querySelector('.' + name);
  win.querySelector('.qat').innerHTML = '<span class="logo">SE</span>' + qat.map(q => q === 'v' ? caret : icon(q)).join('');
  win.querySelector('.menu').innerHTML = menu.map(m => `<a href="#"${m === 'Home' ? ' class="on"' : ''}>${m}</a>`).join('');
  win.querySelector('.ribbon').innerHTML = groups.map(([key, title, cells]) =>
    `<section class="group g-${key}"><div class="cells">${cells.map(c => cell(c, conf, name)).join('')}</div><h2>${title}</h2></section>`).join('');
  win.querySelector('.quick-in').innerHTML = conf.quick.map(q => {
    const [id, label, cls = ''] = q.split('|');
    return `<button class="${cls}">${icon(id)}${label}</button>`;
  }).join('');
  win.querySelector('.tree').innerHTML = conf.tree.map(([lvl, slots, text, cls = '']) =>
    `<li class="l${lvl} ${cls}">${slots.split(' ').map(s => `<i>${s === 'v' ? caret : s === '>' ? icon('rt', 'car') : s === '-' ? '' : icon(s)}</i>`).join('')}<span>${text}${cls === 'sync' ? icon('mark') : ''}</span></li>`).join('');
}
```
